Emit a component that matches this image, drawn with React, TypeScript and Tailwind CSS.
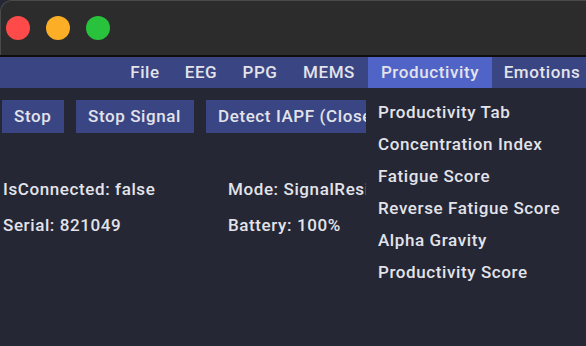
const MENU: { label: string; width: string }[] = [
  { label: "File", width: "w-[54px]" },
  { label: "EEG", width: "w-[58px]" },
  { label: "PPG", width: "w-[60px]" },
  { label: "MEMS", width: "w-[78px]" },
  { label: "Productivity", width: "w-[124px]" },
  { label: "Emotions", width: "w-[100px]" },
];

const DROPDOWN = [
  "Productivity Tab",
  "Concentration Index",
  "Fatigue Score",
  "Reverse Fatigue Score",
  "Alpha Gravity",
  "Productivity Score",
];

const BUTTONS: { label: string; width: string }[] = [
  { label: "Stop", width: "w-[62px]" },
  { label: "Stop Signal", width: "w-[118px]" },
  { label: "Detect IAPF (Closed Eyes)", width: "w-[240px]" },
];

function TrafficLights() {
  return (
    <div className="flex items-center gap-4 pl-[5px]">
      <span className="block h-6 w-6 rounded-full bg-[#fe4a49]" />
      <span className="block h-6 w-6 rounded-full bg-[#fdae27]" />
      <span className="block h-6 w-6 rounded-full bg-[#28c23d]" />
    </div>
  );
}

export default function App() {
  return (
    <div
      className="relative h-[346px] w-[586px] overflow-hidden bg-[#252735] text-[#e3e3ea]"
      style={{ fontFamily: "Roboto, 'Liberation Sans', sans-serif" }}
    >
      {/* window chrome */}
      <div className="flex h-[55px] items-center rounded-tl-[12px] border-l border-t border-[#4a4a4a] bg-[#2c2c2c]">
        <TrafficLights />
      </div>
      <div className="h-[2px] bg-[#0e0e0e]" />

      {/* menu bar */}
      <div className="flex h-[31px] items-stretch bg-[#3a4683] pl-[118px] text-[17px] font-medium tracking-[0.6px]">
        {MENU.map((item) => (
          <div
            key={item.label}
            className={`flex shrink-0 items-center justify-center whitespace-nowrap ${item.width} ${
              item.label === "Productivity" ? "bg-[#5064c8]" : ""
            }`}
          >
            {item.label}
          </div>
        ))}
      </div>

      {/* main content, partly hidden behind the open menu */}
      <div className="w-[366px] overflow-hidden text-[17px] font-medium tracking-[0.6px]">
        <div className="mt-[12px] flex gap-3 whitespace-nowrap pl-[2px]">
          {BUTTONS.map((b) => (
            <button key={b.label} className={`h-[33px] shrink-0 bg-[#3a4683] px-3 text-left ${b.width}`}>
              {b.label}
            </button>
          ))}
        </div>

        <div className="mt-[44px] grid grid-cols-[225px_1fr] gap-y-[10px] whitespace-nowrap pl-[3px]">
          <div>IsConnected: false</div>
          <div className="overflow-hidden">Mode: SignalResistance</div>
          <div>Serial: 821049</div>
          <div>Battery: 100%</div>
        </div>
      </div>

      {/* productivity dropdown */}
      <div className="absolute left-[366px] top-[88px] w-[240px] bg-[#252735] pt-[9px] text-[17px] font-medium tracking-[0.6px]">
        {DROPDOWN.map((item) => (
          <div key={item} className="flex h-8 items-center px-3">
            {item}
          </div>
        ))}
      </div>
    </div>
  );
}
